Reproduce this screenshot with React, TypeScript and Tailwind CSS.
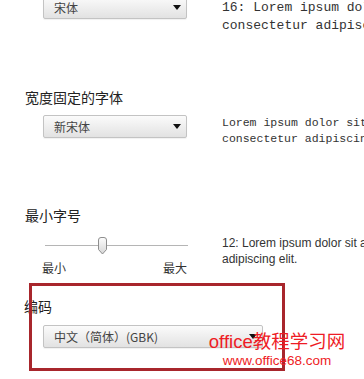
import React from 'react';

const CJK = { fontFamily: '"Noto Sans CJK SC", "Noto Sans", sans-serif' };
const MONO = { fontFamily: '"Liberation Mono", "DejaVu Sans Mono", "Noto Sans CJK SC", monospace' };

function Select({ label, width }: { label: string; width: string }) {
  return (
    <div
      className={`${width} h-[23px] flex items-center justify-between pl-[10px] pr-[5px] rounded-[2px] border border-[#c3c3c3] bg-gradient-to-b from-[#fbfbfb] to-[#e2e2e2] shadow-[0_1px_1px_rgba(0,0,0,0.06)] text-[12px] text-[#444]`}
      style={CJK}
    >
      <span className="leading-none">{label}</span>
      <svg width="8" height="5" viewBox="0 0 8 5">
        <path d="M0 0 H8 L4 5 Z" fill="#111" />
      </svg>
    </div>
  );
}

export default function App() {
  return (
    <div className="relative w-[364px] h-[379px] overflow-hidden bg-white text-[#222]">
      {/* standard font */}
      <div className="flex h-[23px] -mt-[4px]">
        <div className="w-[222px] shrink-0 pl-[43px]">
          <Select label="宋体" width="w-[144px]" />
        </div>
        <div className="pt-[3px] text-[13px] leading-[18px] whitespace-nowrap text-[#333]" style={MONO}>
          <p>16: Lorem ipsum dolor sit amet,</p>
          <p>consectetur adipiscing elit.</p>
        </div>
      </div>

      {/* fixed width */}
      <p className="mt-[70px] h-[16px] pl-[25px] text-[14px] leading-[16px]" style={CJK}>宽度固定的字体</p>
      <div className="flex h-[23px] mt-[10px]">
        <div className="w-[222px] shrink-0 pl-[43px]">
          <Select label="新宋体" width="w-[144px]" />
        </div>
        <div className="text-[11.5px] leading-[16px] whitespace-nowrap text-[#333]" style={MONO}>
          <p>Lorem ipsum dolor sit amet,</p>
          <p>consectetur adipiscing elit.</p>
        </div>
      </div>

      {/* minimum font size */}
      <p className="mt-[69px] h-[16px] pl-[25px] text-[14px] leading-[16px]" style={CJK}>最小字号</p>
      <div className="flex h-[41px] mt-[12px]">
        <div className="w-[222px] shrink-0 pl-[42px]">
          <div className="relative w-[146px] h-[19px]">
            <div className="absolute left-[3px] right-0 top-[10px] h-[1px] bg-[#b5b5b5]" />
            <svg className="absolute left-[55px] top-[2px]" width="11" height="18" viewBox="0 0 11 18">
              <defs>
                <linearGradient id="th" x1="0" y1="0" x2="0" y2="1">
                  <stop offset="0" stopColor="#fdfdfd" />
                  <stop offset="1" stopColor="#d6d6d6" />
                </linearGradient>
              </defs>
              <path d="M1.5 3 Q1.5 0.5 4 0.5 H7 Q9.5 0.5 9.5 3 V12.5 L5.5 17 L1.5 12.5 Z" fill="url(#th)" stroke="#8e8e8e" />
            </svg>
          </div>
          <div className="flex justify-between w-[145px] mt-[6px] text-[12px] leading-[16px] text-[#333]" style={CJK}>
            <span>最小</span>
            <span>最大</span>
          </div>
        </div>
        <div
          className="text-[12px] leading-[16px] whitespace-nowrap text-[#333]"
          style={{ fontFamily: '"Liberation Sans", Arial, sans-serif' }}
        >
          <p>12: Lorem ipsum dolor sit amet, consectetur</p>
          <p>adipiscing elit.</p>
        </div>
      </div>

      {/* encoding */}
      <p className="mt-[22px] h-[16px] pl-[24px] text-[14px] leading-[16px]" style={CJK}>编码</p>
      <div className="mt-[11px] pl-[43px]">
        <Select label="中文（简体）(GBK)" width="w-[220px]" />
      </div>

      {/* annotation box */}
      <div className="absolute left-[29px] top-[283px] w-[256px] h-[88px] border-[3px] border-[#a8262c]" />

      {/* watermark */}
      <div
        className="absolute left-[200px] top-[331px] w-[154px] flex flex-col items-center text-[#ee1c25]"
        style={{ fontFamily: '"Liberation Sans", "Noto Sans CJK SC", sans-serif' }}
      >
        <span className="text-[18.5px] leading-[22px] whitespace-nowrap">office教程学习网</span>
        <span className="text-[13.5px] leading-[16px] whitespace-nowrap">www.office68.com</span>
      </div>
    </div>
  );
}
